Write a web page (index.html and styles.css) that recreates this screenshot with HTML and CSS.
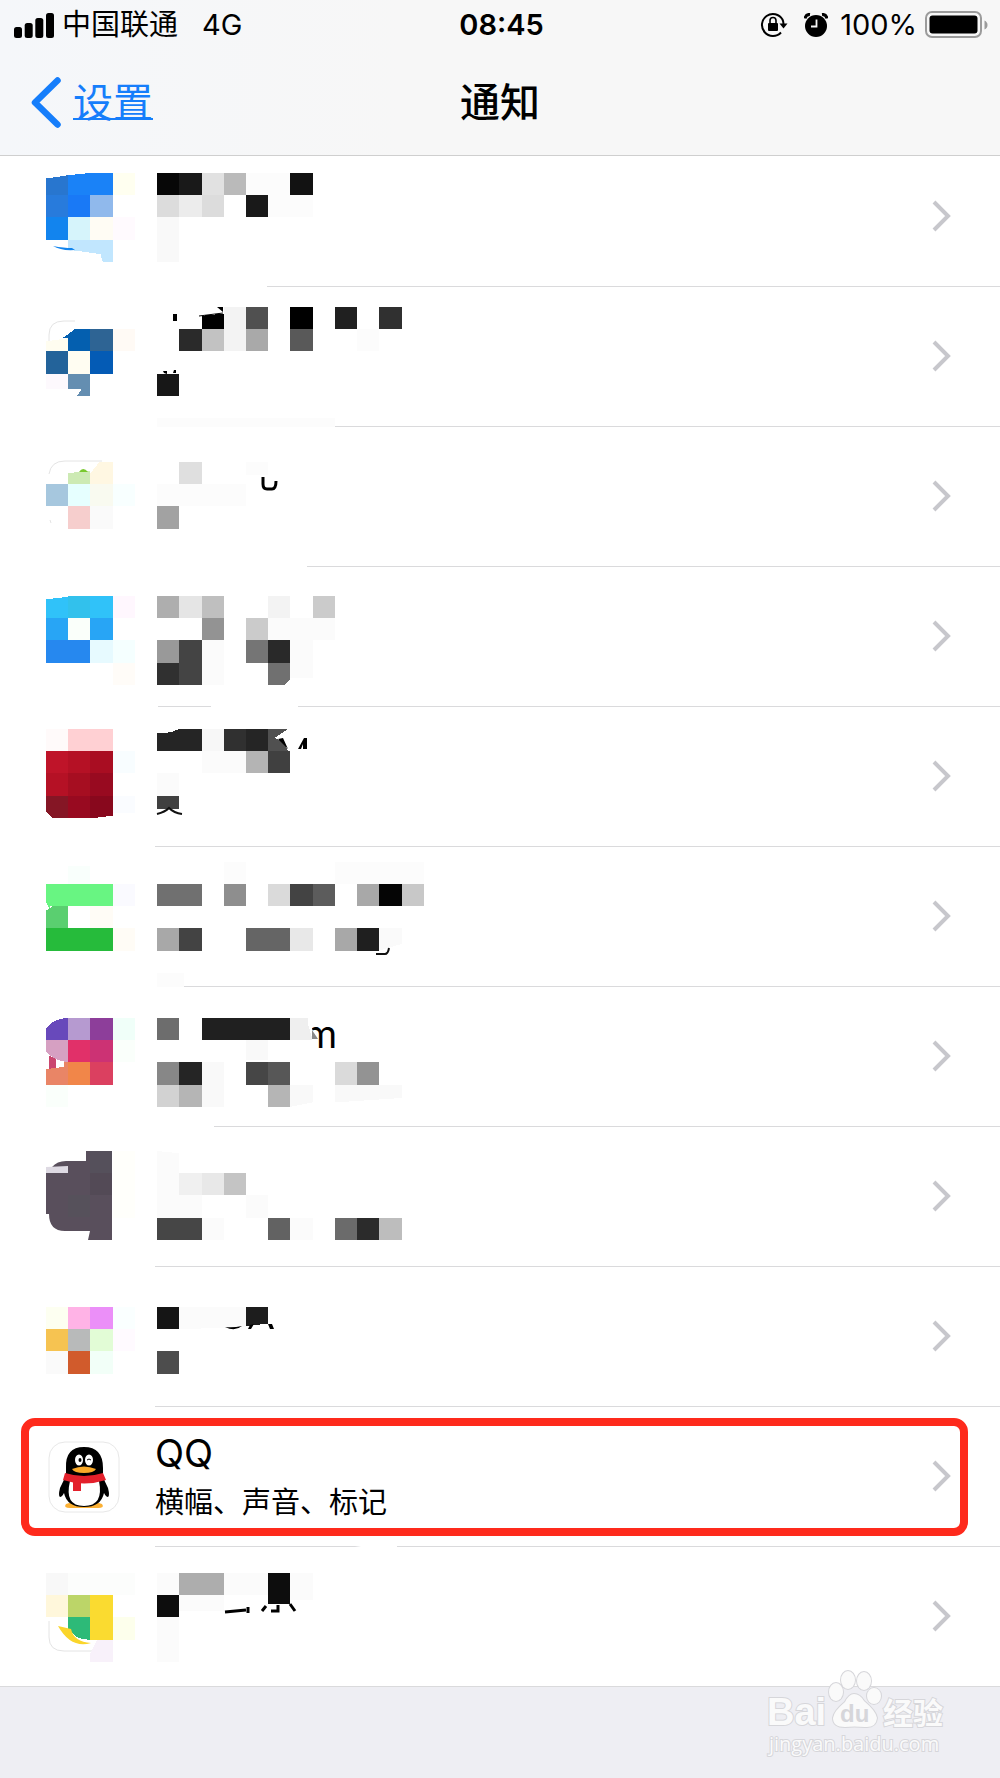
FILE: index.html
```html
<!DOCTYPE html>
<html lang="zh-CN">
<head>
<meta charset="utf-8">
<meta name="viewport" content="width=device-width, initial-scale=1">
<title>通知</title>
<link rel="stylesheet" href="styles.css">
</head>
<body>
<header class="top">
  <div class="status">
    <div class="status-side">
      <svg class="signal" width="40" height="25" viewBox="0 0 40 25" aria-hidden="true"><rect x="0" y="14" width="8" height="11" rx="2.5"/><rect x="10.700" y="10" width="8" height="15" rx="2.500"/><rect x="21.300" y="5" width="8" height="20" rx="2.500"/><rect x="32" y="0" width="8" height="25" rx="2.500"/></svg>
      <span class="carrier">中国联通</span>
      <span class="network">4G</span>
    </div>
    <time class="clock">08:45</time>
    <div class="status-side status-right">
      <svg class="lock" width="28" height="26" viewBox="0 0 28 26" aria-hidden="true"><path d="M22.500 7.500A11 11 0 1 0 21 20.500M22.500 7.500Q23.500 9.500 23.500 12" fill="none" stroke="#000" stroke-width="2"/><path d="M19.500 11.500h8l-4 5z"/><rect x="8" y="11" width="10" height="8" rx="1"/><path d="M10 11V8.500a3 3 0 0 1 6 0V11" fill="none" stroke="#000" stroke-width="1.600"/></svg>
      <svg class="alarm" width="24" height="25" viewBox="0 0 24 25" aria-hidden="true"><circle cx="12" cy="13" r="11"/><path d="M1 5.500Q2 1 6 1.500M23 5.500Q22 1 18 1.500" fill="none" stroke="#000" stroke-width="3"/><path d="M12.500 6.500v7H7" fill="none" stroke="#f7f7f7" stroke-width="1.800"/></svg>
      <span class="percent">100%</span>
      <svg class="battery" width="64" height="28" viewBox="0 0 64 28" aria-hidden="true"><rect x="1" y="1" width="55" height="25" rx="6" fill="none" stroke="#9b9b9b" stroke-width="2"/><rect x="4.500" y="4.500" width="48" height="18" rx="3"/><path d="M59.500 9.500q3 1.500 3 4.500t-3 4.500z" fill="#9b9b9b"/></svg>
    </div>
  </div>
  <nav class="nav">
    <a class="back" href="#settings">
      <svg width="30" height="51" viewBox="0 0 30 51" aria-hidden="true"><path d="M26.500 3.500 4 25.500 26.500 47.500" fill="none" stroke="#167efb" stroke-width="6.500" stroke-linecap="round" stroke-linejoin="round"/></svg>
      <span class="back-label">设置</span>
    </a>
    <h1 class="title">通知</h1>
  </nav>
</header>

<main>
<ul class="list">
  <li class="item rule-267"><a class="row" href="#app-1" aria-label="应用 1">
    <svg class="mosaic" width="440" height="140" viewBox="0 0 440 140" aria-hidden="true">
      <g class="cells" transform="translate(46 26) scale(22.220)">
        <path fill="#2876cf" d="M0 .25 1 .1V1H0z"/><path fill="#1a82f7" d="M1 .1 2 0H3V1H1z"/><path fill="#fffff0" d="M3 0h1v1h-1z"/>
        <path fill="#287bdc" d="M0 1h1v1h-1z"/><path fill="#1979f6" d="M1 1h1v1h-1z"/><path fill="#90b9ec" d="M2 1h1v1h-1z"/>
        <path fill="#1284ee" d="M0 2h1v1h-1z"/><path fill="#d6f4fb" d="M1 2h1v1h-1z"/><path fill="#fffcf4" d="M2 2h1v1h-1z"/><path fill="#fffafe" d="M3 2h1v1h-1z"/>
        <path fill="#c1e6fe" d="M1 3h2v1h-.450l-.1-.350L1 3.450z"/>
        <path fill="#070707" d="M5 0h1v1h-1z"/><path fill="#191919" d="M6 0h1v1h-1z"/><path fill="#e1e1e1" d="M7 0h1v1h-1z"/><path fill="#bababa" d="M8 0h1v1h-1z"/><path fill="#fcfcfc" d="M9 0h2v1h-2z"/><path fill="#121212" d="M11 0h1v1h-1z"/>
        <path fill="#dcdcdc" d="M5 1h1v1h-1zM7 1h1v1h-1z"/><path fill="#ececec" d="M6 1h1v1h-1z"/><path fill="#191919" d="M9 1h1v1h-1z"/><path fill="#fcfcfc" d="M10 1h2v1h-2z"/><path fill="#f9f9f9" d="M5 2h1v2h-1z"/>
      </g>
      <path d="M53 99q8 5 22 4l-3-2q-8 0-19-2z" fill="#1284ee"/>
    </svg>
    <svg class="chevron" width="19" height="32" viewBox="0 0 19 32" aria-hidden="true"><path d="M2 2 16 16 2 30"/></svg>
  </a></li>

  <li class="item rule-333"><a class="row" href="#app-2" aria-label="应用 2">
    <svg class="mosaic" width="440" height="140" viewBox="0 0 440 140" aria-hidden="true">
      <path d="M49 54V48Q49 34 64 34h11" fill="none" stroke="#e4e4e4"/>
      <path d="M58 83q8 2 20 1" fill="none" stroke="#e4e4e4"/>
      <g class="cells" transform="translate(46 20) scale(22.220)">
        <path fill="#fffdf0" d="M0 1.550 1 1.400V2H0z"/><path fill="#045faf" d="M.75 1.400 1.300 1H2V2H1V1.400z"/><path fill="#2e6494" d="M2 1h1v1h-1z"/><path fill="#fffaf5" d="M3 1h1v1h-1z"/>
        <path fill="#23639a" d="M0 2h1v1h-1z"/><path fill="#fffdf2" d="M1 2h1v1h-1z"/><path fill="#045bb5" d="M2 2h1v1h-1z"/><path fill="#fdf9fd" d="M0 3h1v.7H0z"/><path fill="#648eb1" d="M1 3h1v1h-.6l.2-.300H1z"/>
        <path fill="#000" d="M7 .4 8 .3V1H7z"/><path fill="#f3f3f3" d="M8 0h1v2h-1z"/><path fill="#505050" d="M9 0h1v1h-1z"/><path fill="#000" d="M11 0h1v1h-1z"/><path fill="#202020" d="M13 0h1v1h-1z"/><path fill="#303030" d="M15 0h1v1h-1z"/>
        <path fill="#2a2a2a" d="M6 1h1v1h-1z"/><path fill="#c2c2c2" d="M7 1h1v1h-1z"/><path fill="#a9a9a9" d="M9 1h1v1h-1z"/><path fill="#595959" d="M11 1h1v1h-1z"/><path fill="#fcfcfc" d="M14 1h1v1h-1zM5 5h8v1H5z"/><path fill="#171717" d="M5 3h1v1h-1z"/>
      </g>
      <path d="M173 27h4v7h-4zM217 20h6v5zM163 84l4 0 0 3-3-1zM173 86l1-3 2 0 0 3z"/><path d="M199 29l24-3" stroke="#000"/>
    </svg>
    <svg class="chevron" width="19" height="32" viewBox="0 0 19 32" aria-hidden="true"><path d="M2 2 16 16 2 30"/></svg>
  </a></li>

  <li class="item rule-307"><a class="row" href="#app-3" aria-label="应用 3">
    <svg class="mosaic" width="440" height="140" viewBox="0 0 440 140" aria-hidden="true">
      <path d="M49 47Q51 34 65 34h37M50 93l1 3" fill="none" stroke="#e4e4e4"/>
      <g class="cells" transform="translate(46 35) scale(22.220)">
        <path fill="#cdeab4" d="M1 .5 2 .4V1H1z"/><path fill="#fff7e2" d="M2 .5 2.400 0H3V1H2z"/><path fill="#a6c7de" d="M0 1h1v1h-1z"/><path fill="#e6ffff" d="M1 1h1v1h-1z"/><path fill="#f9faf0" d="M2 1h1v1h-1z"/><path fill="#f8ffff" d="M3 1h1v1h-1z"/><path fill="#f6cecd" d="M1 2h1v1h-1z"/><path fill="#fafafa" d="M2 2h1v1h-1z"/>
        <path fill="#dfdfdf" d="M6 0h1v1h-1z"/><path fill="#fcfcfc" d="M5 1h4v1H5zM9 0h1v.6H9z"/><path fill="#a2a2a2" d="M5 2h1v1h-1z"/>
      </g>
      <path d="M79 45q4-6 9 0z" fill="#79c92e"/><path d="M263 50v7q0 5 4 5h5q4 0 4-8" fill="none" stroke="#000" stroke-width="3"/>
    </svg>
    <svg class="chevron" width="19" height="32" viewBox="0 0 19 32" aria-hidden="true"><path d="M2 2 16 16 2 30"/></svg>
  </a></li>

  <li class="item rule-158"><a class="row" href="#app-4" aria-label="应用 4">
    <svg class="mosaic" width="440" height="140" viewBox="0 0 440 140" aria-hidden="true">
      <g class="cells" transform="translate(46 29) scale(22.220)">
        <path fill="#30c2f9" d="M0 .15 1.300 0H3V1H0z"/><path fill="#32c1ec" d="M1 0h1v1h-1z"/><path fill="#fff7fe" d="M3 0h1v1h-1z"/><path fill="#28a5f5" d="M0 1h1v1h-1zM2 1h1v1h-1z"/><path fill="#fafffa" d="M1 1h1v1h-1z"/><path fill="#2688ef" d="M0 2h2v1h-2z"/><path fill="#e7faff" d="M2 2h1v1h-1z"/><path fill="#f5ffff" d="M3 2h1v1h-1z"/><path fill="#fffcf8" d="M3 3h1v1h-1z"/>
        <path fill="#aeaeae" d="M5 0h1v1h-1z"/><path fill="#e5e5e5" d="M6 0h1v1h-1z"/><path fill="#bfbfbf" d="M7 0h1v1h-1z"/><path fill="#f3f3f3" d="M10 0h1v1h-1z"/><path fill="#cbcbcb" d="M12 0h1v1h-1zM9 1h1v1h-1z"/><path fill="#939393" d="M7 1h1v1h-1z"/><path fill="#fbfbfb" d="M10 1h3v1h-3zM11 2h1v1.700h-1zM7 2h1v2h-1z"/>
        <path fill="#999" d="M5 2h1v1h-1z"/><path fill="#444" d="M6 2h1v2h-1z"/><path fill="#757575" d="M9 2h1v1h-1z"/><path fill="#292929" d="M10 2h1v1h-1z"/><path fill="#303030" d="M5 3h1v1h-1z"/><path fill="#707070" d="M10 3h1v.750l-.25.25H10z"/>
      </g>
      <path d="M211 138h87v2h-87z" fill="#fff"/>
    </svg>
    <svg class="chevron" width="19" height="32" viewBox="0 0 19 32" aria-hidden="true"><path d="M2 2 16 16 2 30"/></svg>
  </a></li>

  <li class="item rule-155"><a class="row" href="#app-5" aria-label="应用 5">
    <svg class="mosaic" width="440" height="140" viewBox="0 0 440 140" aria-hidden="true">
      <g class="cells" transform="translate(46 22) scale(22.220)">
        <path fill="#fffafa" d="M0 0h1v1h-1z"/><path fill="#ffd0d3" d="M1 0h2v1h-2z"/><path fill="#bf1429" d="M0 1h1v1h-1z"/><path fill="#b51125" d="M1 1h1v1h-1zM0 2h1v1h-1z"/><path fill="#a90d22" d="M2 1h1v1h-1z"/><path fill="#a60e21" d="M1 2h1v1h-1z"/><path fill="#980a20" d="M2 2h1v1h-1zM1 3h1v1h-1z"/><path fill="#851625" d="M0 3h1v1H.3L0 3.700z"/><path fill="#88081d" d="M2 3h1v.9L2.200 4H2z"/><path fill="#f8fdff" d="M3 1h1v1h-1z"/><path fill="#fafcff" d="M3 3h1v.8H3z"/>
        <path fill="#252525" d="M5 .2 5.600.15 6 0H7V1H5zM9 0h1v1h-1z"/><path fill="#f7f7f7" d="M7 0h1v1h-1z"/><path fill="#303030" d="M8 0h1v1h-1z"/><path fill="#505050" d="M10 0h.9L10.300.4 10.700.6 10.900 1H10z"/><path fill="#fbfbfb" d="M7 1h2v1H7zM5 2h1v1H5z"/><path fill="#b4b4b4" d="M9 1h1v1h-1z"/><path fill="#404040" d="M10 1h1v1h-1zM5 3h1v.6H5z"/>
      </g>
      <path d="M278 32l5-1 5 11zM298 42l6-11h3v11h-4v-5l-2 5z"/><path d="M157 107q8-2 12-6 5 5 13 6" fill="none" stroke="#111" stroke-width="2"/>
    </svg>
    <svg class="chevron" width="19" height="32" viewBox="0 0 19 32" aria-hidden="true"><path d="M2 2 16 16 2 30"/></svg>
  </a></li>

  <li class="item rule-184"><a class="row" href="#app-6" aria-label="应用 6">
    <svg class="mosaic" width="440" height="140" viewBox="0 0 440 140" aria-hidden="true">
      <g class="cells" transform="translate(46 37) scale(22.220)">
        <path fill="#f9fffc" d="M1-.8h1V0H1z"/><path fill="#68f582" d="M0 0h3v1H.2v.2L0 .8z"/><path fill="#5acf70" d="M0 1.200.3 1H1V2H0z"/><path fill="#fffcf6" d="M2 1h1v1h-1zM3 2h1v1h-1z"/><path fill="#fafaff" d="M3 0h1v1h-1z"/><path fill="#26bb3b" d="M0 2h3v1h-3z"/>
        <path fill="#fcfcfc" d="M8-1h1v1H8zM13-1h4v1h-4zM5 4h1.200v1H5z"/><path fill="#707070" d="M5 0h2v1h-2z"/><path fill="#8e8e8e" d="M8 0h1v1h-1z"/><path fill="#dadada" d="M10 0h1v1h-1z"/><path fill="#434343" d="M11 0h1v1h-1zM6 2h1v1h-1z"/><path fill="#5c5c5c" d="M12 0h1v1h-1z"/><path fill="#a8a8a8" d="M14 0h1v1h-1zM5 2h1v1h-1zM13 2h1v1h-1z"/><path fill="#050505" d="M15 0h1v1h-1z"/><path fill="#c8c8c8" d="M16 0h1v1h-1z"/>
        <path fill="#656565" d="M9 2h2v1h-2z"/><path fill="#e8e8e8" d="M11 2h1v1h-1z"/><path fill="#1f1f1f" d="M14 2h1v1h-1z"/><path fill="#fafafa" d="M15 2h1v.7l-1 .3z"/>
      </g>
      <path d="M376 107h9q3 0 4-6" fill="none" stroke="#111" stroke-width="2"/>
    </svg>
    <svg class="chevron" width="19" height="32" viewBox="0 0 19 32" aria-hidden="true"><path d="M2 2 16 16 2 30"/></svg>
  </a></li>

  <li class="item rule-214"><a class="row" href="#app-7" aria-label="应用 7">
    <svg class="mosaic" width="440" height="140" viewBox="0 0 440 140" aria-hidden="true">
      <text class="fragment" x="304" y="61">m</text>
      <path d="M300 34h12v8l6 11v10h-18z" fill="#fff"/><path d="M312 43l6 9h-6z" fill="#888"/>
      <g class="cells" transform="translate(46 31) scale(22.220)">
        <path fill="#6849bb" d="M0 .5Q.3 0 1 0V1H0z"/><path fill="#b69ad0" d="M1 0h1v1h-1z"/><path fill="#8d3e9a" d="M2 0h1v1h-1z"/><path fill="#f0fff9" d="M3 0h1v1h-1z"/><path fill="#d6a0c2" d="M0 1h1v1Q.300 1.900 0 1.500z"/><path fill="#e13069" d="M1 1h1v1h-1z"/><path fill="#cc3274" d="M2 1h1v1h-1z"/><path fill="#ca476f" d="M.15 1.700 .45 1.850V2.300H.15z"/><path fill="#e98566" d="M0 2.300 .8 2.200V2H1V3H0z"/><path fill="#f18649" d="M1 2h1v1h-1z"/><path fill="#db4060" d="M2 2h1v1h-1z"/><path fill="#fafffb" d="M3 1h1v1h-1zM0 3h1v1h-1z"/>
        <path fill="#6d6d6d" d="M5 0h1v1h-1z"/><path fill="#202020" d="M7 0h4v1H7z"/><path fill="#efefef" d="M11 0h.8v.3L12 1h-1z"/><path fill="#f9f9f9" d="M9 1h1v.9H9zM7 2h1v2H7zM13 3h3v.6l-3 .2zM11 3h1v.8l-1 .2z"/><path fill="#878787" d="M5 2h1v1h-1z"/><path fill="#252525" d="M6 2h1v1h-1z"/><path fill="#464646" d="M9 2h1v1h-1z"/><path fill="#575757" d="M10 2h1v1h-1z"/><path fill="#dadada" d="M13 2h1v1h-1z"/><path fill="#939393" d="M14 2h1v1h-1z"/><path fill="#d2d2d2" d="M5 3h1v1h-1z"/><path fill="#b5b5b5" d="M6 3h1v1h-1zM10 3h1v1h-1z"/>
      </g>
    </svg>
    <svg class="chevron" width="19" height="32" viewBox="0 0 19 32" aria-hidden="true"><path d="M2 2 16 16 2 30"/></svg>
  </a></li>

  <li class="item rule-155"><a class="row" href="#app-8" aria-label="应用 8">
    <svg class="mosaic" width="440" height="140" viewBox="0 0 440 140" aria-hidden="true">
      <path d="M46 46l6-6q5-6 14-6h20V24h26v89H88l2-9H65q-16 0-16-17h-3z" fill="#594f5c"/>
      <path d="M90 24h22v22H90z" fill="#55505b"/><path d="M90 46h22v22H90z" fill="#534a56"/><path d="M68 68h22v22H68z" fill="#56515b"/><path d="M46 40l22-1v7H46z" fill="#dedae3"/>
      <g class="cells" transform="translate(46 24) scale(22.220)">
        <path fill="#fffffb" d="M3 0h1v3h-1z"/><path fill="#fbfbfb" d="M5 0 6 .1V2H7V3H5zM9 2h1v1h-1zM7 3h1v1h-1zM11 3h1v1h-1z"/><path fill="#f0f0f0" d="M6 1h1v1h-1z"/><path fill="#e8e8e8" d="M7 1h1v1h-1z"/><path fill="#c4c4c4" d="M8 1h1v1h-1z"/>
        <path fill="#464646" d="M5 3h2v1h-2z"/><path fill="#626262" d="M10 3h1v1h-1z"/><path fill="#6b6b6b" d="M13 3h1v1h-1z"/><path fill="#2b2b2b" d="M14 3h1v1h-1z"/><path fill="#bdbdbd" d="M15 3h1v1h-1z"/>
      </g>
    </svg>
    <svg class="chevron" width="19" height="32" viewBox="0 0 19 32" aria-hidden="true"><path d="M2 2 16 16 2 30"/></svg>
  </a></li>

  <li class="item rule-155"><a class="row" href="#app-9" aria-label="应用 9">
    <svg class="mosaic" width="440" height="140" viewBox="0 0 440 140" aria-hidden="true">
      <g class="cells" transform="translate(46 40) scale(22.220)">
        <path fill="#fdfff1" d="M0 0h1v1h-1z"/><path fill="#ffb3e6" d="M1 0h1v1h-1z"/><path fill="#eb8ff8" d="M2 0h1v1h-1z"/><path fill="#faffff" d="M3 0h1v1h-1z"/><path fill="#f6c351" d="M0 1h1v1h-1z"/><path fill="#b8baba" d="M1 1h1v1h-1z"/><path fill="#e2fcd6" d="M2 1h1v1h-1z"/><path fill="#fffaff" d="M3 1h1v1h-1z"/><path fill="#fafafa" d="M0 2h1v1h-1z"/><path fill="#d15b2c" d="M1 2h1v1h-1z"/><path fill="#f2fff8" d="M2 2h1v1h-1z"/>
        <path fill="#151515" d="M5 0h1v1h-1z"/><path fill="#fbfbfb" d="M6 0h3v.9L6 1z"/><path fill="#1d1d1d" d="M9 0h1v.75L9 .85z"/><path fill="#4d4d4d" d="M5 2h1v1h-1z"/>
      </g>
      <path d="M225 60q8 1 17-1-7 6-17 1zM250 58l4-1-3 5h-3zM268 57h4l2 5h-4z"/>
    </svg>
    <svg class="chevron" width="19" height="32" viewBox="0 0 19 32" aria-hidden="true"><path d="M2 2 16 16 2 30"/></svg>
  </a></li>

  <li class="item rule-155 rule-gap marked"><a class="row" href="#qq">
    <svg class="app-icon" width="72" height="72" viewBox="0 0 72 72" aria-hidden="true">
      <rect x="1" y="1" width="70" height="70" rx="16" fill="#fff" stroke="#e8e8e8"/>
      <path d="M18 63Q24 60 34 63h4q10-3 16 0 3 4-4 4H22q-7 0-4-4z" fill="#fbb034"/>
      <path d="M18 27Q17 6 36 6T55 27V34Q56 40 60 47q2 8 0 9-2 0-4-4-3 14-20 14T16 52q-2 4-4 4-2-1 0-9 4-8 6-13z" fill="#000"/>
      <path d="M22 40Q36 44 51 40q5 25-15 25T22 40z" fill="#fff"/>
      <path d="M17 32q19 6 38 0l3 7Q36 46 15 39z" fill="#e3202b"/><path d="M25 40h8v10h-8z" fill="#e3202b"/>
      <ellipse cx="31" cy="19" rx="4" ry="5.500" fill="#fff"/><ellipse cx="41" cy="19" rx="4" ry="5.500" fill="#fff"/><ellipse cx="32" cy="19" rx="1.500" ry="2"/><path d="M39 19q2-2 4 0" fill="none" stroke="#000"/>
      <path d="M24 28q12-5 24 0-2 4-12 4t-12-4z" fill="#f9a928"/>
    </svg>
    <span class="text"><span class="name">QQ</span><span class="detail">横幅、声音、标记</span></span>
    <svg class="chevron" width="19" height="32" viewBox="0 0 19 32" aria-hidden="true"><path d="M2 2 16 16 2 30"/></svg>
  </a></li>

  <li class="item rule-full"><a class="row" href="#app-11" aria-label="应用 11">
    <svg class="mosaic" width="440" height="140" viewBox="0 0 440 140" aria-hidden="true">
      <path d="M49 74v16q0 14 15 14h28" fill="none" stroke="#e4e4e4"/>
      <g class="cells" transform="translate(46 26) scale(22.220)">
        <path fill="#f8f8f8" d="M0 0h1v1h-1z"/><path fill="#fcfdfc" d="M1 0h3v1H1z"/><path fill="#fff7db" d="M0 1h1v1h-1z"/><path fill="#bcd568" d="M1 1h1v1h-1z"/><path fill="#fadb30" d="M2 1h1v2h-1z"/><path fill="#2dba78" d="M1 2h1v1Q1.200 3 1.100 2.500H1z"/><path fill="#fdffec" d="M3 2h1v1h-1z"/><path fill="#f8f1fa" d="M2 4V3.600L2.300 3H3V4z"/>
        <path fill="#fbfbfb" d="M5 0h1v1h-1zM8 0h2v1H8zM11 0h1v1.200h-1zM6 1h2v.7H6zM5 2h1v2h-1z"/><path fill="#adadad" d="M6 0h2v1h-2z"/><path fill="#0d0d0d" d="M5 1h1v1h-1zM10 0h1v1.400h-1z"/>
      </g>
      <path d="M58 79l13 3q3 13 20 14-20 6-33-17z" fill="#fad52b"/>
      <path d="M225 65l21-2M248 60v6M262 64l4-5M271 64h7v-6M290 57l5 7" fill="none" stroke="#000" stroke-width="3"/>
    </svg>
    <svg class="chevron" width="19" height="32" viewBox="0 0 19 32" aria-hidden="true"><path d="M2 2 16 16 2 30"/></svg>
  </a></li>
</ul>
</main>

<footer class="footer">
  <svg class="watermark" width="190" height="96" viewBox="0 0 190 96" role="img" aria-label="Baidu 经验">
    <g class="ink">
      <text class="wm-latin" x="7" y="58">Bai</text>
      <ellipse cx="76" cy="25" rx="7" ry="9"/><ellipse cx="88" cy="13" rx="7" ry="9"/><ellipse cx="104" cy="14" rx="7" ry="9"/><ellipse cx="114" cy="29" rx="7" ry="8"/>
      <path d="M94 27q6 0 10 7 12 10 13 17-1 10-12 9-11-1-20 0-12 0-12-9 1-7 12-16 4-8 9-8z"/>
      <text class="wm-cjk" x="123" y="57">经验</text>
      <text class="wm-url" x="9" y="84">jingyan.baidu.com</text>
    </g>
    <text class="wm-du" x="80" y="55">du</text>
  </svg>
</footer>
</body>
</html>
```
FILE: styles.css
```css
* {
  box-sizing: border-box;
}

body {
  margin: 0;
  min-height: 100vh;
  display: flex;
  flex-direction: column;
  background: #fff;
  color: #000;
  font-family: Inter, "Noto Sans CJK SC", sans-serif;
}

a {
  color: inherit;
  text-decoration: none;
}

svg {
  display: block;
  flex: none;
}

.top {
  height: 156px;
  background: linear-gradient(90deg, #f5f7fa, #f7f7f7 40%);
  border-bottom: 1px solid #cfcfcf;
}

.status {
  display: grid;
  grid-template-columns: 1fr auto 1fr;
  align-items: center;
  height: 50px;
  padding: 0 11px 0 14px;
  font-size: 29px;
  line-height: 40px;
}

.status-side {
  display: flex;
  align-items: center;
}

.status-right {
  justify-content: flex-end;
}

.carrier {
  margin: 0 24px 0 8px;
}

.clock {
  font-weight: 600;
}

.lock {
  margin-right: 16px;
}

.alarm {
  margin-right: 12px;
}

.percent {
  margin-right: 8px;
}

.nav {
  display: grid;
  grid-template-columns: 1fr auto 1fr;
  align-items: center;
  height: 105px;
  padding: 0 31px;
}

.back {
  display: flex;
  align-items: center;
  gap: 12px;
  color: #167efb;
}

.back-label {
  font-size: 40px;
  line-height: 56px;
  text-decoration: underline;
  text-decoration-thickness: 2px;
  text-decoration-skip-ink: none;
}

.title {
  margin: 0;
  font-size: 40px;
  font-weight: 500;
  line-height: 56px;
}

.list {
  margin: 0;
  padding: 0;
  overflow: hidden;
  list-style: none;
}

.item {
  position: relative;
  height: 140px;
  background: linear-gradient(#dadadc, #dadadc) no-repeat right bottom;
  background-size: calc(100% - var(--rule-start)) 1px;
}

/* The list is scrolled a little way under the header. */
.item:first-child {
  margin-top: -9px;
}

.rule-full { --rule-start: 0px; }
.rule-155 { --rule-start: 155px; }
.rule-158 { --rule-start: 158px; }
.rule-184 { --rule-start: 184px; }
.rule-214 { --rule-start: 214px; }
.rule-267 { --rule-start: 267px; }
.rule-307 { --rule-start: 307px; }
.rule-333 { --rule-start: 333px; }

.rule-gap {
  background:
    linear-gradient(90deg, transparent 355px, #fff 361px, #fff 397px, transparent 397px),
    linear-gradient(#dadadc, #dadadc) no-repeat right bottom / calc(100% - var(--rule-start)) 1px;
}

.row {
  display: flex;
  align-items: center;
  height: 100%;
  padding-right: 49px;
}

.chevron {
  margin: 0 0 2px auto;
  fill: none;
  stroke: #c7c7cc;
  stroke-width: 4;
}

.cells {
  shape-rendering: crispEdges;
}

.fragment {
  font-size: 38px;
}

.marked::after {
  content: "";
  position: absolute;
  inset: 11px 32px 11px 21px;
  border: 8px solid #fe2a1c;
  border-radius: 14px;
  pointer-events: none;
}

.app-icon {
  margin: 0 35px 0 48px;
}

.text {
  display: flex;
  flex-direction: column;
}

.name {
  font-size: 38px;
  line-height: 52px;
}

.detail {
  font-size: 29px;
  line-height: 48px;
}

.footer {
  position: relative;
  flex: 1;
  min-height: 91px;
  background: #eeeef3;
}

.watermark {
  position: absolute;
  right: 50px;
  bottom: 15px;
}

.ink {
  fill: #fafafa;
  stroke: #d6d6da;
  stroke-width: 2;
  paint-order: stroke;
}

.wm-latin {
  font: bold 38px "Liberation Sans", sans-serif;
}

.wm-cjk {
  font: bold 30px "Noto Sans CJK SC", sans-serif;
}

.wm-url {
  font: 20px "Open Sans", sans-serif;
}

.wm-du {
  fill: #d6d6da;
  font: bold 24px "Liberation Sans", sans-serif;
}
```
